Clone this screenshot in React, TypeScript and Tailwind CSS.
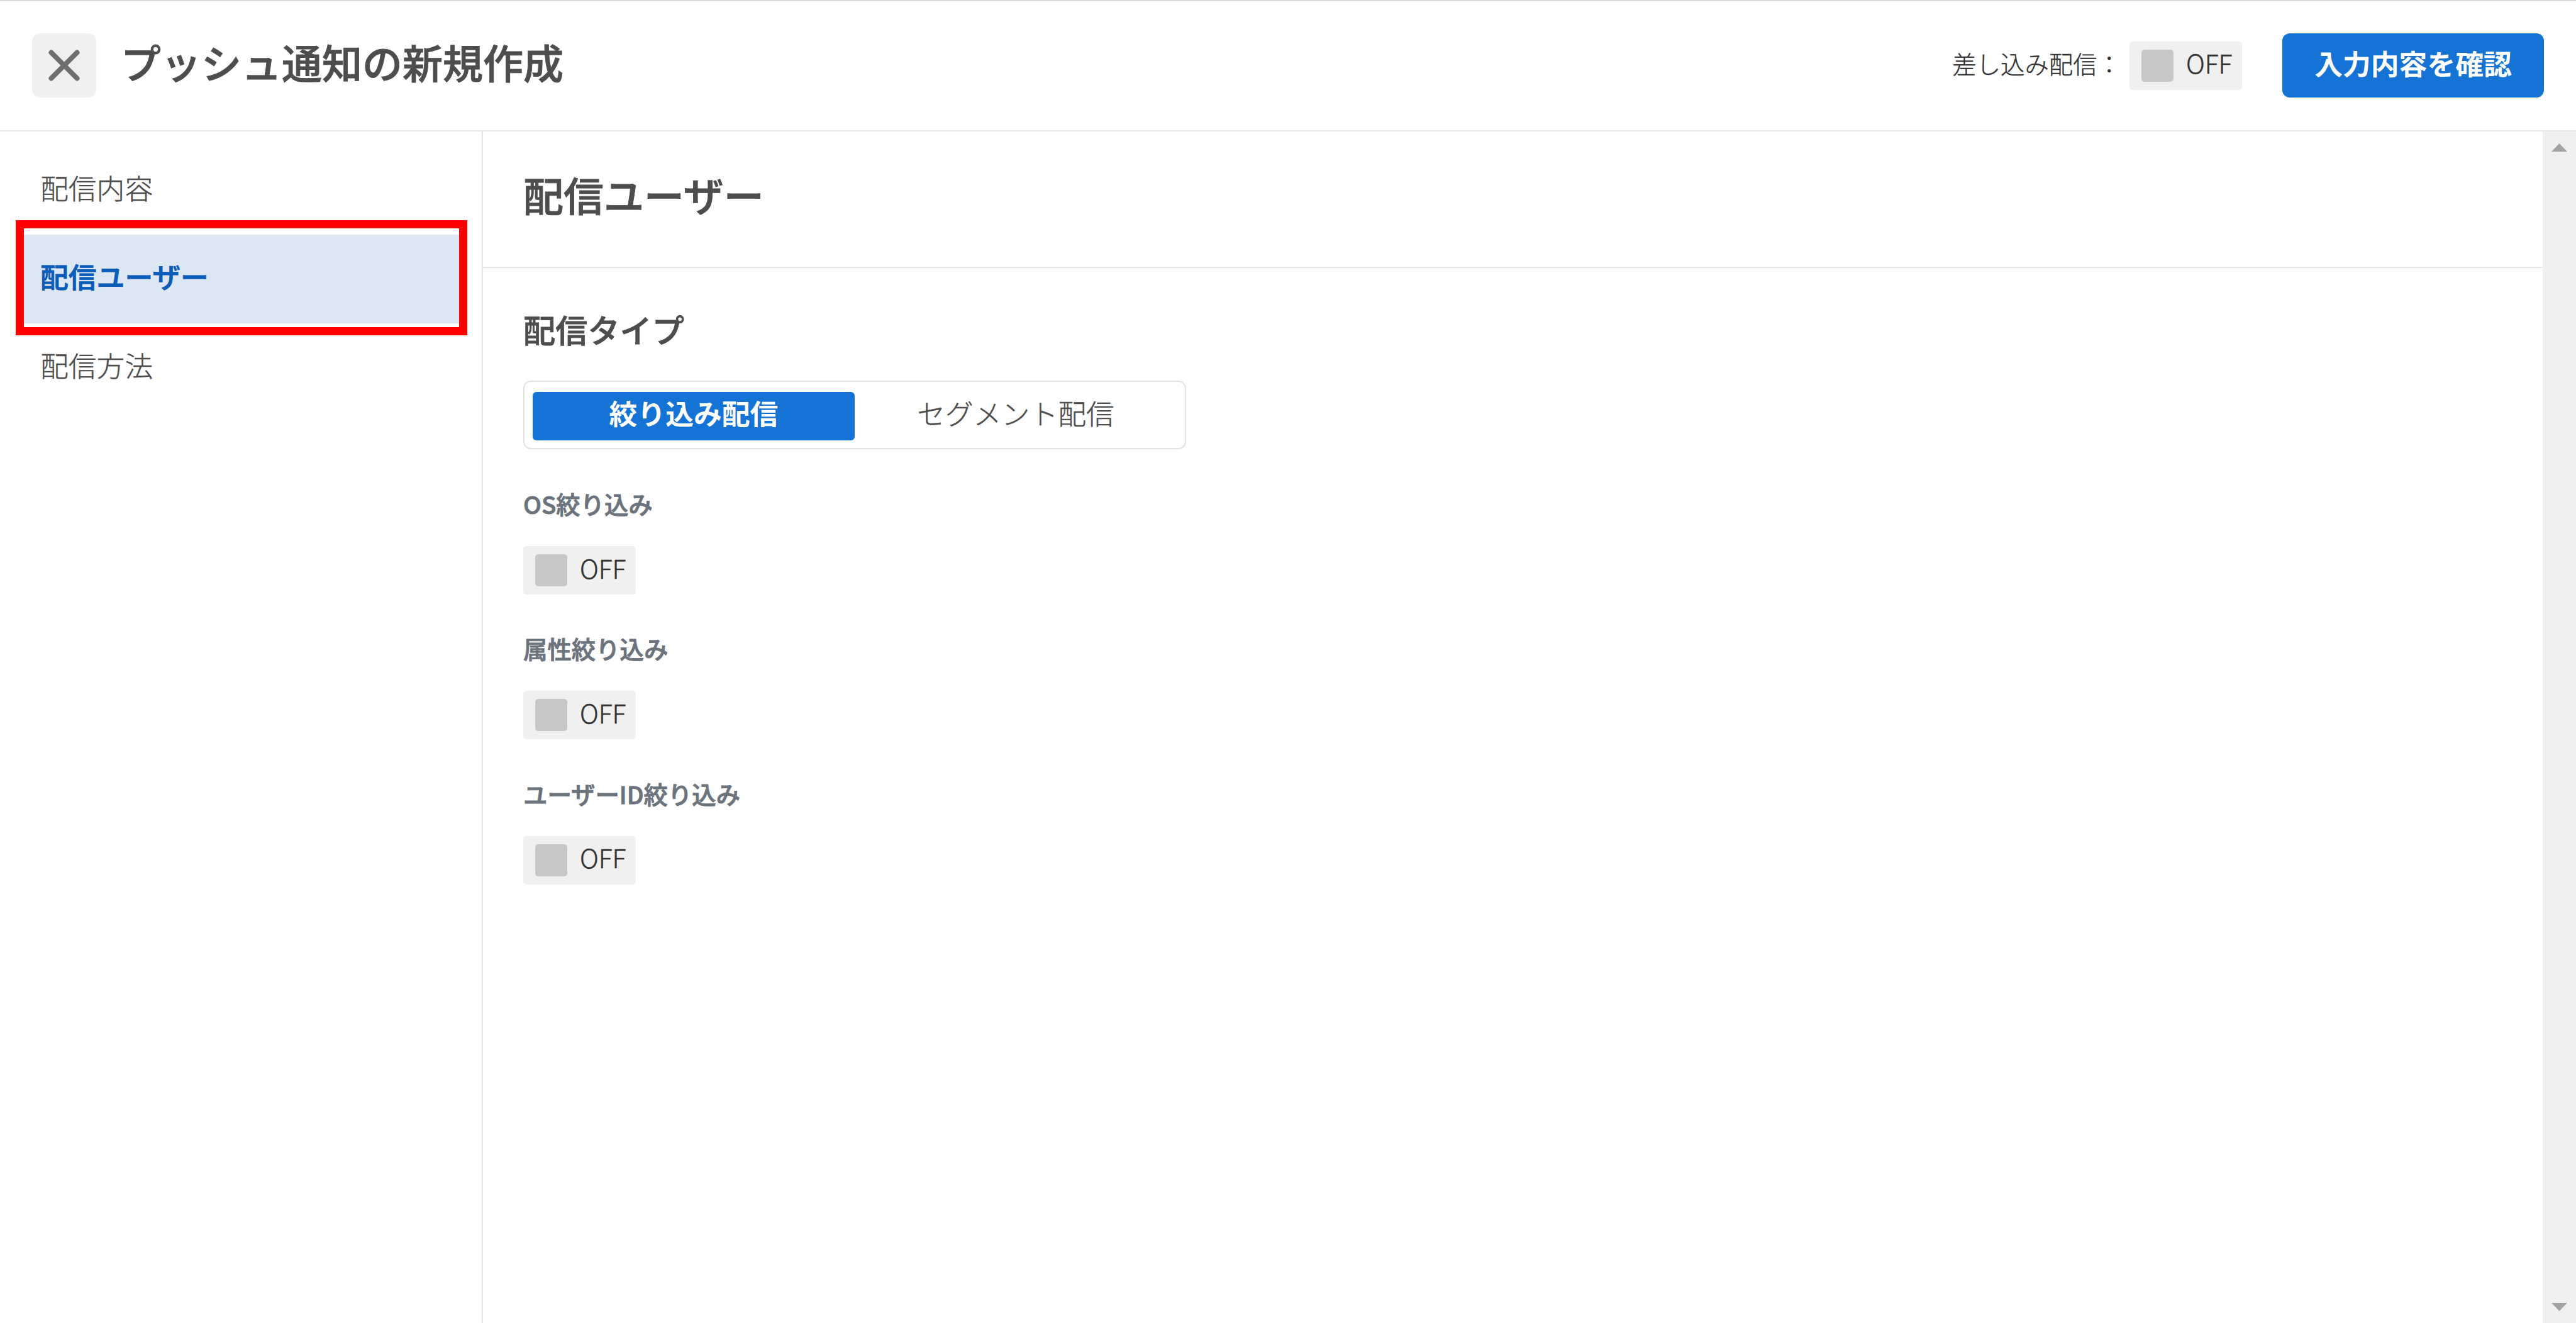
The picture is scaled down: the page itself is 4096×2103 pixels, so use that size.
import clsx from "clsx";

const NAV_ITEMS = [
  { label: "配信内容", active: false },
  { label: "配信ユーザー", active: true },
  { label: "配信方法", active: false },
];

const FILTERS = ["OS絞り込み", "属性絞り込み", "ユーザーID絞り込み"];

function Toggle() {
  return (
    <button className="flex h-[77px] w-[179px] shrink-0 items-center rounded-[5px] bg-[#f0f0f0] pl-[19px]">
      <span className="size-[51px] shrink-0 rounded-[5px] bg-[#c7c7c7]" />
      <span className="pb-[10px] pl-[20px] text-[41px] leading-[56px] font-light text-[#333333] [-webkit-text-stroke:0.5px_#333333]">
        OFF
      </span>
    </button>
  );
}

function Header() {
  return (
    <header className="flex h-[209px] shrink-0 items-center justify-between border-t-2 border-b-2 border-t-[#d9d9d9] border-b-[#e5e6ea] px-[51px] pb-px">
      <div className="flex items-center">
        <button className="flex size-[102px] items-center justify-center rounded-[13px] bg-[#f0f0f0]">
          <svg className="size-[50px]" viewBox="0 0 50 50" fill="none" stroke="#6e6e6e" strokeWidth="8" strokeLinecap="round">
            <path d="M4.5 4.5 45.5 45.5M45.5 4.5 4.5 45.5" />
          </svg>
        </button>
        <h1 className="pb-[14px] pl-[39px] text-[64px] leading-[80px] font-medium text-[#4d4d4d] [-webkit-text-stroke:0.9px_#4d4d4d]">
          プッシュ通知の新規作成
        </h1>
      </div>
      <div className="flex items-center">
        <span className="pr-[13px] pb-[8px] text-[38.4px] leading-[56px] font-light text-[#333333] [-webkit-text-stroke:0.4px_#333333]">
          差し込み配信：
        </span>
        <Toggle />
        <button className="ml-[64px] flex h-[102px] w-[416px] items-center justify-center rounded-[12px] bg-[#1473d4] pb-[8px] text-[44.8px] leading-[64px] font-bold text-white">
          入力内容を確認
        </button>
      </div>
    </header>
  );
}

function Sidebar() {
  return (
    <nav className="w-[768px] shrink-0 border-r-2 border-[#e5e6ea] pt-[23.5px]">
      {NAV_ITEMS.map((item) => (
        <div
          key={item.label}
          className={clsx(
            "relative flex h-[140.8px] items-center text-[44.8px] leading-[64px]",
            item.active
              ? "font-medium text-[#0a5cb8] [-webkit-text-stroke:0.9px_#0a5cb8]"
              : "font-light text-[#4d4d4d] [-webkit-text-stroke:0.4px_#4d4d4d]",
          )}
        >
          {item.active && (
            <>
              <div className="absolute inset-y-0 left-[38px] w-[692px] bg-[#dce7f3]" />
              {/* Highlight frame */}
              <div className="absolute -top-[23px] left-[25px] h-[183px] w-[718px] border-[13px] border-[#ff0000]" />
            </>
          )}
          <span className="relative pb-[9px] pl-[64px]">{item.label}</span>
        </div>
      ))}
    </nav>
  );
}

function Scrollbar() {
  return (
    <div className="flex w-[53px] shrink-0 flex-col items-center justify-between bg-[#f0f0f0] pt-[19px] pb-[19px]">
      <svg className="h-[13px] w-[25px]" viewBox="0 0 25 13" fill="#a3a3a3">
        <path d="M12.5 0 25 13H0Z" />
      </svg>
      <svg className="h-[13px] w-[25px]" viewBox="0 0 25 13" fill="#a3a3a3">
        <path d="M0 0H25L12.5 13Z" />
      </svg>
    </div>
  );
}

export default function App() {
  return (
    <div className="flex h-[2103px] w-[4096px] flex-col overflow-hidden bg-white font-['Noto_Sans_CJK_JP',sans-serif]">
      <Header />
      <div className="flex min-h-0 flex-1">
        <Sidebar />
        <main className="min-w-0 flex-1">
          <div className="flex h-[217px] items-center border-b-2 border-[#e5e6ea] pb-[18px] pl-[64px]">
            <h2 className="text-[64px] leading-[80px] font-medium text-[#4d4d4d] [-webkit-text-stroke:0.9px_#4d4d4d]">
              配信ユーザー
            </h2>
          </div>
          <div className="pt-[65px] pl-[64px]">
            <h3 className="text-[51.2px] leading-[64px] font-medium text-[#4d4d4d] [-webkit-text-stroke:0.8px_#4d4d4d]">
              配信タイプ
            </h3>
            <div className="mt-[50px] flex h-[109px] w-[1054px] items-center rounded-[12px] border-2 border-[#e3e3e3] pt-[3px] pl-[13px]">
              <button className="flex h-[77px] w-[512px] items-center justify-center rounded-[6px] bg-[#1473d4] pb-[11px] text-[44.8px] font-bold text-white">
                絞り込み配信
              </button>
              <button className="flex h-[77px] w-[512px] items-center justify-center pb-[11px] text-[44.8px] font-light text-[#4d4d4d] [-webkit-text-stroke:0.4px_#4d4d4d]">
                セグメント配信
              </button>
            </div>
            <div className="mt-[62px] flex flex-col gap-[61.4px]">
              {FILTERS.map((label) => (
                <div key={label}>
                  <div className="mb-[44px] text-[38.4px] leading-[48px] font-medium text-[#6b737d] [-webkit-text-stroke:0.9px_#6b737d]">
                    {label}
                  </div>
                  <Toggle />
                </div>
              ))}
            </div>
          </div>
        </main>
        <Scrollbar />
      </div>
    </div>
  );
}
